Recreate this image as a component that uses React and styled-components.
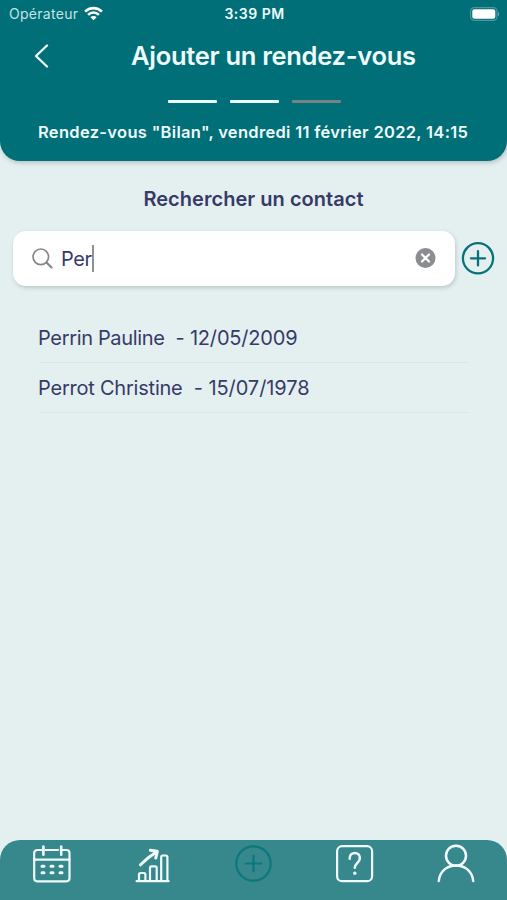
import React from "react";
import styled, { createGlobalStyle } from "styled-components";

const TEAL = "#006f78";
const INK = "#373a69";

const GlobalStyle = createGlobalStyle`
  * { box-sizing: border-box; }
  body { margin: 0; background: #e4f0f0; }
  svg { display: block; flex: none; }
`;

const Screen = styled.div`
  display: flex;
  flex-direction: column;
  width: 507px;
  height: 900px;
  overflow: hidden;
  background: #e4f0f0;
  color: ${INK};
  font-family: Inter, "Liberation Sans", sans-serif;
  font-feature-settings: "calt" 0;
`;

const Header = styled.header`
  flex: none;
  height: 161px;
  background: ${TEAL};
  border-radius: 0 0 20px 20px;
  box-shadow: 1px 2px 4px rgba(60, 80, 85, 0.28);
  color: #effbfc;
`;

const StatusBar = styled.div`
  display: grid;
  grid-template-columns: 1fr auto 1fr;
  align-items: center;
  height: 27px;
  padding: 0 7px 0 9px;
`;

const Carrier = styled.div`
  display: flex;
  align-items: center;
  gap: 6px;
  font-size: 14px;
  letter-spacing: 0.28px;
  color: #c5e3e6;
`;

const Clock = styled.div`
  font-size: 14px;
  font-weight: 600;
  letter-spacing: 0.5px;
`;

const Battery = styled.div`
  justify-self: end;
`;

const TitleBar = styled.div`
  display: flex;
  align-items: center;
  height: 56px;
  padding-left: 34px;
`;

const Title = styled.h1`
  margin: 0 0 0 82px;
  font-size: 25.5px;
  font-weight: 600;
  letter-spacing: -0.29px;
  white-space: nowrap;
`;

const Steps = styled.div`
  display: flex;
  justify-content: center;
  gap: 13px;
  padding: 17px 0 0 1px;
`;

const Step = styled.div`
  width: 49px;
  height: 2.6px;
  border-radius: 1px;
  background: ${(p) => (p.$done ? "#effbfc" : "#748485")};
`;

const Summary = styled.div`
  margin-top: 19.4px;
  padding-left: 38px;
  font-size: 16.5px;
  line-height: 20px;
  font-weight: 600;
  letter-spacing: 0.31px;
  white-space: nowrap;
`;

const Main = styled.main`
  flex: 1;
`;

const SectionTitle = styled.h2`
  margin: 26px 0 0;
  font-size: 20px;
  line-height: 25px;
  font-weight: 600;
  letter-spacing: 0.03px;
  text-align: center;
`;

const SearchRow = styled.div`
  display: flex;
  align-items: center;
  gap: 6px;
  margin-top: 19px;
  padding: 0 12.5px 0 13px;
`;

const SearchField = styled.div`
  display: flex;
  align-items: center;
  flex: 1;
  height: 55px;
  padding: 0 19px;
  border-radius: 13px;
  background: #fff;
  box-shadow: 1px 2px 4px rgba(60, 80, 85, 0.24);
`;

const Query = styled.span`
  margin-left: 8px;
  font-size: 20px;
  letter-spacing: -0.4px;
`;

const Caret = styled.span`
  width: 2px;
  height: 27px;
  margin-right: auto;
  background: #8d8f99;
`;

const Contacts = styled.ul`
  margin: 27px 38px 0;
  padding: 0;
  list-style: none;
`;

const Contact = styled.li`
  height: 50px;
  font-size: 20px;
  line-height: 50px;
  white-space: pre;
  background: linear-gradient(#d9e6e8, #d9e6e8) 1px 100% / 100% 1px no-repeat;
`;

const ContactPart = styled.span`
  letter-spacing: ${(p) => p.$tracking}px;
`;

const TabBar = styled.nav`
  flex: none;
  display: grid;
  grid-template-columns: repeat(5, 101px);
  justify-items: center;
  height: 60px;
  padding: 4px 0 0 1px;
  border-radius: 20px 20px 0 0;
  background: #36888d;
`;

const Tab = styled.div`
  width: 40px;
  height: 40px;
`;

const Wifi = () => (
  <svg width="19" height="15" viewBox="0 0 19 15" fill="none" stroke="#fff" strokeWidth="2.6">
    <path d="M1.1 5.6a12 12 0 0 1 16.8 0M4.1 8.8a7.6 7.6 0 0 1 10.8 0" />
    <path d="M9.5 14.2L6.4 11.2a4.4 4.4 0 0 1 6.2 0z" fill="#fff" stroke="none" />
  </svg>
);

const BatteryIcon = () => (
  <svg width="30" height="14" viewBox="0 0 30 14">
    <rect x="0.6" y="0.6" width="26.4" height="12.8" rx="3.6" fill="none" stroke="#4d979d" strokeWidth="1.2" />
    <rect x="2.3" y="2.3" width="23" height="9.4" rx="2" fill="#fff" />
    <path d="M28 4.8a2.6 2.6 0 0 1 0 4.4z" fill="#68a9ae" />
  </svg>
);

const BackIcon = () => (
  <svg width="15" height="26" viewBox="0 0 15 26" fill="none" stroke="#effbfc" strokeWidth="2.3" strokeLinecap="round" strokeLinejoin="round">
    <path d="M13 3.5L2 14l11 10.5" />
  </svg>
);

const SearchIcon = () => (
  <svg width="21" height="22" viewBox="0 0 21 22" fill="none" stroke="#85878b" strokeWidth="1.7" strokeLinecap="round">
    <circle cx="8.8" cy="8.8" r="7.8" />
    <path d="M14.5 14.5l5 5" strokeWidth="2.2" />
  </svg>
);

const ClearIcon = () => (
  <svg width="21" height="21" viewBox="0 0 21 21">
    <circle cx="10.5" cy="10" r="10" fill="#8c8d90" />
    <path d="M7 6.5l7 7M14 6.5l-7 7" stroke="#fff" strokeWidth="2.2" strokeLinecap="round" />
  </svg>
);

const AddIcon = () => (
  <svg width="34" height="34" viewBox="0 0 34 34" fill="none" stroke="#08727a" strokeWidth="2.3" strokeLinecap="round">
    <circle cx="17" cy="16.3" r="15.1" />
    <path d="M17 9.2v14.2M9.9 16.3h14.2" />
  </svg>
);

const CalendarIcon = () => (
  <svg width="40" height="40" viewBox="0 0 40 40" fill="none" stroke="#f1fbfc" strokeWidth="2.2" strokeLinecap="round">
    <path d="M9.3 6H5.2a3 3 0 0 0-3 3v25.3a3 3 0 0 0 3 3h29.3a3 3 0 0 0 3-3V9a3 3 0 0 0-3-3h-4M13.5 6h12.5" />
    <path strokeWidth="2.6" d="M11.4 2.5v8.2M29.2 2.5v8.2" />
    <path d="M2.2 15.7h35.3" />
    <path strokeWidth="3" d="M10 22.3h2M19 22.3h2M28 22.3h2M10 28.7h2M19 28.7h2M28 28.7h2" />
  </svg>
);

const ChartIcon = () => (
  <svg width="40" height="40" viewBox="0 0 40 40" fill="none" stroke="#f1fbfc" strokeWidth="2.2" strokeLinecap="round" strokeLinejoin="round">
    <path d="M3.6 37.2h32M6 37v-6.5q0-1.500 1.500-1.500h3.400q1.500 0 1.500 1.500V37M17 37V23.800q0-1.500 1.500-1.500h3.700q1.500 0 1.500 1.500V37M28.200 37V13q0-1.500 1.500-1.500h3.200q1.500 0 1.500 1.500V37" />
    <path strokeWidth="3" d="M7.500 20.800Q14 14 23.300 8M17.300 6.300l7 1-1.500 6.700" />
  </svg>
);

const NewIcon = () => (
  <svg width="40" height="40" viewBox="0 0 40 40" fill="none" stroke="#0c777d" strokeWidth="2.2" strokeLinecap="round">
    <circle cx="19.5" cy="19.5" r="17.2" />
    <path d="M19.5 11.7v15.6M11.7 19.5h15.6" />
  </svg>
);

const HelpIcon = () => (
  <svg width="40" height="40" viewBox="0 0 40 40" fill="none" stroke="#f1fbfc" strokeWidth="2.2" strokeLinecap="round">
    <rect x="2.1" y="2.2" width="35" height="35" rx="5" />
    <path d="M14.7 14.7v-.7c0-6.800 10.200-6.800 10.200 0 0 4.800-5.100 4.800-5.100 9.800" strokeWidth="2.500" />
    <circle cx="19.800" cy="29.300" r="1.700" fill="#f1fbfc" stroke="none" />
  </svg>
);

const PersonIcon = () => (
  <svg width="40" height="40" viewBox="0 0 40 40" fill="none" stroke="#f1fbfc" strokeWidth="2.5" strokeLinecap="round">
    <circle cx="20" cy="11.8" r="10" />
    <path d="M2.800 37C4.500 16.300 35.500 16.300 37.200 37" />
  </svg>
);

const contacts = [
  { name: "Perrin Pauline", birth: "12/05/2009", nameTracking: -0.34, birthTracking: -0.18 },
  { name: "Perrot Christine", birth: "15/07/1978", nameTracking: -0.22, birthTracking: -0.06 },
];

const tabs = [CalendarIcon, ChartIcon, NewIcon, HelpIcon, PersonIcon];

export default function App() {
  return (
    <Screen>
      <GlobalStyle />
      <Header>
        <StatusBar>
          <Carrier>Opérateur <Wifi /></Carrier>
          <Clock>3:39 PM</Clock>
          <Battery><BatteryIcon /></Battery>
        </StatusBar>
        <TitleBar>
          <BackIcon />
          <Title>Ajouter un rendez-vous</Title>
        </TitleBar>
        <Steps>
          <Step $done />
          <Step $done />
          <Step />
        </Steps>
        <Summary>Rendez-vous "Bilan", vendredi 11 février 2022, 14:15</Summary>
      </Header>
      <Main>
        <SectionTitle>Rechercher un contact</SectionTitle>
        <SearchRow>
          <SearchField>
            <SearchIcon />
            <Query>Per</Query>
            <Caret />
            <ClearIcon />
          </SearchField>
          <AddIcon />
        </SearchRow>
        <Contacts>
          {contacts.map((c) => (
            <Contact key={c.name}>
              <ContactPart $tracking={c.nameTracking}>{c.name}</ContactPart>
              <ContactPart $tracking={c.birthTracking}>{`  - ${c.birth}`}</ContactPart>
            </Contact>
          ))}
        </Contacts>
      </Main>
      <TabBar>
        {tabs.map((Icon, i) => (
          <Tab key={i}><Icon /></Tab>
        ))}
      </TabBar>
    </Screen>
  );
}
